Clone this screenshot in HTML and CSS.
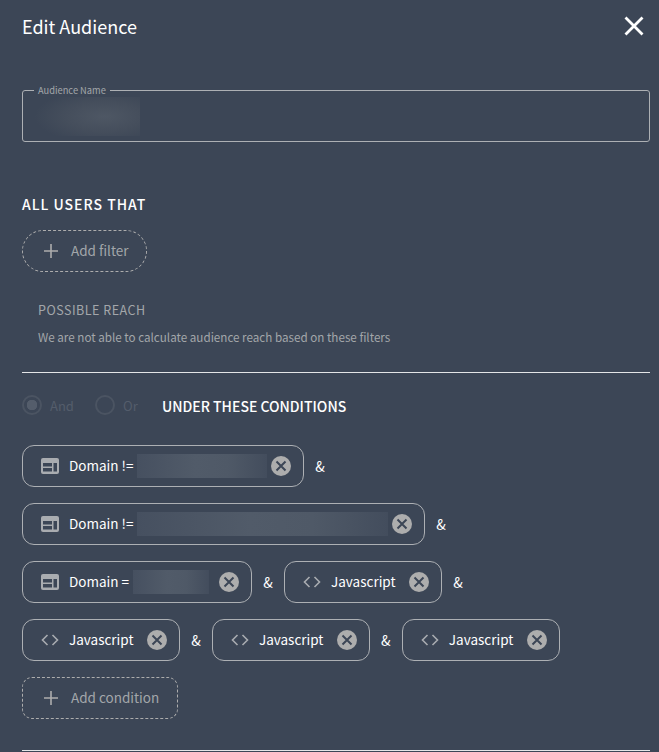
FILE: index.html
```html
<!DOCTYPE html>
<html lang="en">
<head>
    <meta charset="UTF-8">
    <meta name="viewport" content="width=device-width, initial-scale=1.0">
    <title>Edit Audience</title>
    <link rel="stylesheet" href="styles.css">
</head>
<body>
    <svg class="icon-defs" width="0" height="0">
        <symbol id="icon-domain" viewBox="0 0 18 16">
            <rect x="0" y="0" width="18" height="16" rx="2" fill="#a9acb0"/>
            <rect x="2" y="5" width="9" height="3.5" fill="#3c4656"/>
            <rect x="2" y="10" width="9" height="3.5" fill="#3c4656"/>
            <rect x="12.5" y="5" width="3.5" height="8.5" fill="#3c4656"/>
        </symbol>
        <symbol id="icon-code" viewBox="0 0 18 12">
            <path d="M6.5 1 1.5 6l5 5M11.5 1l5 5-5 5" fill="none" stroke="#a9acb0" stroke-width="1.6"/>
        </symbol>
        <symbol id="icon-remove" viewBox="0 0 20 20">
            <circle cx="10" cy="10" r="10" fill="#adadad"/>
            <path d="M5.5 5.5l9 9M14.5 5.5l-9 9" fill="none" stroke="#3c4656" stroke-width="2"/>
        </symbol>
        <symbol id="icon-plus" viewBox="0 0 14 14">
            <path d="M7 0v14M0 7h14" fill="none" stroke="#adadad" stroke-width="1.6"/>
        </symbol>
    </svg>

    <div class="panel">
        <div class="panel-header">
            <h1 class="panel-title">Edit Audience</h1>
            <button class="close-btn" aria-label="Close">
                <svg width="20" height="20" viewBox="0 0 20 20">
                    <path d="M1.5 1.5l17 17M18.5 1.5l-17 17" fill="none" stroke="#fff" stroke-width="2.8"/>
                </svg>
            </button>
        </div>

        <fieldset class="name-field">
            <legend>Audience Name</legend>
            <div class="redacted name-value"></div>
        </fieldset>

        <h2 class="section-title">ALL USERS THAT</h2>
        <button class="add-btn add-filter">
            <svg class="plus" width="14" height="14"><use href="#icon-plus"/></svg>
            <span class="add-label">Add filter</span>
        </button>

        <div class="reach">
            <div class="reach-title">POSSIBLE REACH</div>
            <p class="reach-text">We are not able to calculate audience reach based on these filters</p>
        </div>

        <hr class="divider">

        <div class="conditions-head">
            <label class="radio checked"><span class="radio-dot"></span>And</label>
            <label class="radio"><span class="radio-dot"></span>Or</label>
            <span class="conditions-title">UNDER THESE CONDITIONS</span>
        </div>

        <div class="chip-row">
            <div class="chip">
                <svg class="chip-icon" width="18" height="16"><use href="#icon-domain"/></svg>
                <span class="chip-label">Domain !=</span>
                <span class="redacted chip-value w-129"></span>
                <svg class="chip-remove" width="20" height="20"><use href="#icon-remove"/></svg>
            </div>
            <span class="amp">&amp;</span>
        </div>
        <div class="chip-row">
            <div class="chip">
                <svg class="chip-icon" width="18" height="16"><use href="#icon-domain"/></svg>
                <span class="chip-label">Domain !=</span>
                <span class="redacted chip-value w-250"></span>
                <svg class="chip-remove" width="20" height="20"><use href="#icon-remove"/></svg>
            </div>
            <span class="amp">&amp;</span>
        </div>
        <div class="chip-row">
            <div class="chip">
                <svg class="chip-icon" width="18" height="16"><use href="#icon-domain"/></svg>
                <span class="chip-label">Domain =</span>
                <span class="redacted chip-value w-76"></span>
                <svg class="chip-remove" width="20" height="20"><use href="#icon-remove"/></svg>
            </div>
            <span class="amp">&amp;</span>
            <div class="chip">
                <svg class="chip-icon" width="18" height="12"><use href="#icon-code"/></svg>
                <span class="chip-label code">Javascript</span>
                <svg class="chip-remove" width="20" height="20"><use href="#icon-remove"/></svg>
            </div>
            <span class="amp">&amp;</span>
        </div>
        <div class="chip-row">
            <div class="chip">
                <svg class="chip-icon" width="18" height="12"><use href="#icon-code"/></svg>
                <span class="chip-label code">Javascript</span>
                <svg class="chip-remove" width="20" height="20"><use href="#icon-remove"/></svg>
            </div>
            <span class="amp">&amp;</span>
            <div class="chip">
                <svg class="chip-icon" width="18" height="12"><use href="#icon-code"/></svg>
                <span class="chip-label code">Javascript</span>
                <svg class="chip-remove" width="20" height="20"><use href="#icon-remove"/></svg>
            </div>
            <span class="amp">&amp;</span>
            <div class="chip">
                <svg class="chip-icon" width="18" height="12"><use href="#icon-code"/></svg>
                <span class="chip-label code">Javascript</span>
                <svg class="chip-remove" width="20" height="20"><use href="#icon-remove"/></svg>
            </div>
        </div>

        <button class="add-btn add-condition">
            <svg class="plus" width="14" height="14"><use href="#icon-plus"/></svg>
            <span class="add-label">Add condition</span>
        </button>

        <hr class="divider bottom">
    </div>
</body>
</html>
```

FILE: styles.css
```css
html, body {
    margin: 0;
    padding: 0;
    height: 100%;
    overflow: hidden;
}

body {
    background: #3c4656;
    color: #fff;
    font-family: "Noto Sans CJK SC", "Noto Sans", sans-serif;
}

.icon-defs {
    position: absolute;
}

.panel {
    height: 752px;
    padding: 0 9px 0 22px;
    box-sizing: border-box;
    overflow: hidden;
}

.panel-header {
    height: 54px;
    display: flex;
    align-items: center;
    justify-content: space-between;
}

.panel-title {
    margin: 0 0 2px;
    font-size: 18px;
    font-weight: 400;
    line-height: 52px;
}

.close-btn {
    width: 20px;
    height: 20px;
    margin: 0 6px 2px 0;
    padding: 0;
    border: none;
    background: transparent;
    display: flex;
}

.name-field {
    height: 58px;
    margin: 30px 0 0;
    padding: 0 5px;
    box-sizing: border-box;
    border: 1px solid #adb0b4;
    border-radius: 3px;
}

.name-field legend {
    padding: 0 4px;
    margin-left: 6px;
    font-size: 9.3px;
    line-height: 12px;
    color: #a3a6aa;
}

.redacted {
    background: linear-gradient(90deg, #465060 0%, #515b69 45%, #4f5967 70%, #434d5d 100%);
}

.name-value {
    width: 112px;
    height: 39px;
    margin-top: 1px;
    background: radial-gradient(ellipse 62% 70% at 68% 50%, #4e5764 0%, #454e5c 55%, #3c4656 100%);
}

.section-title {
    margin: 51px 0 0;
    font-size: 14px;
    font-weight: 500;
    line-height: 22px;
    letter-spacing: 1px;
}

.add-btn {
    display: flex;
    align-items: center;
    height: 42px;
    padding: 0 0 0 21px;
    box-sizing: border-box;
    background: transparent;
    border: 1px dashed #adadad;
    color: #a3a6aa;
    font: inherit;
    font-size: 13.5px;
}

.add-label {
    margin-bottom: 2px;
}

.plus {
    margin-right: 13px;
}

.add-filter {
    width: 125px;
    margin-top: 15px;
    border-radius: 21px;
}

.add-condition {
    width: 156px;
    margin-top: 16px;
    border-radius: 10px;
}

.reach {
    margin: 28px 0 0 16px;
}

.reach-title {
    font-size: 12.5px;
    line-height: 20px;
    letter-spacing: 0.5px;
    color: #a3a6aa;
}

.reach-text {
    margin: 7px 0 0;
    font-size: 11.65px;
    line-height: 20px;
    color: #a3a6aa;
}

.divider {
    height: 1px;
    margin: 25px 0 0;
    border: none;
    background: #e4e5e7;
}

.conditions-head {
    height: 24px;
    margin-top: 21px;
    display: flex;
    align-items: center;
}

.radio {
    display: flex;
    align-items: center;
    width: 73px;
    margin-top: -2px;
    font-size: 13px;
    color: #545d6b;
}

.radio + .radio {
    width: 67px;
}

.radio-dot {
    width: 20px;
    height: 20px;
    margin-right: 8px;
    box-sizing: border-box;
    border: 2px solid #4b5462;
    border-radius: 50%;
}

.radio.checked .radio-dot {
    background: radial-gradient(circle, #545d6b 0 5px, transparent 5.5px);
}

.conditions-title {
    font-size: 14px;
    font-weight: 500;
    line-height: 24px;
}

.chip-row {
    display: flex;
    align-items: center;
    margin-top: 16px;
}

.conditions-head + .chip-row {
    margin-top: 27px;
}

.chip {
    display: flex;
    align-items: center;
    height: 42px;
    padding: 0 12px 0 18px;
    box-sizing: border-box;
    border: 1px solid #adb0b4;
    border-radius: 12px;
}

.chip-icon {
    flex: none;
    margin-right: 10px;
}

.chip-label {
    margin-bottom: 2px;
    font-size: 13.5px;
    font-weight: 400;
    white-space: nowrap;
}

.chip-label.code {
    margin-right: 9.4px;
}

.chip-value {
    height: 24px;
    margin-left: 4px;
}

.w-129 { width: 129.5px; }
.w-250 { width: 250.5px; }
.w-76 { width: 76px; margin-right: 6px; }

.chip-remove {
    flex: none;
    margin-left: 4px;
}

.amp {
    width: 16px;
    margin: 0 8px;
    font-size: 14px;
    text-align: center;
}

.divider.bottom {
    margin-top: 31px;
}
```
